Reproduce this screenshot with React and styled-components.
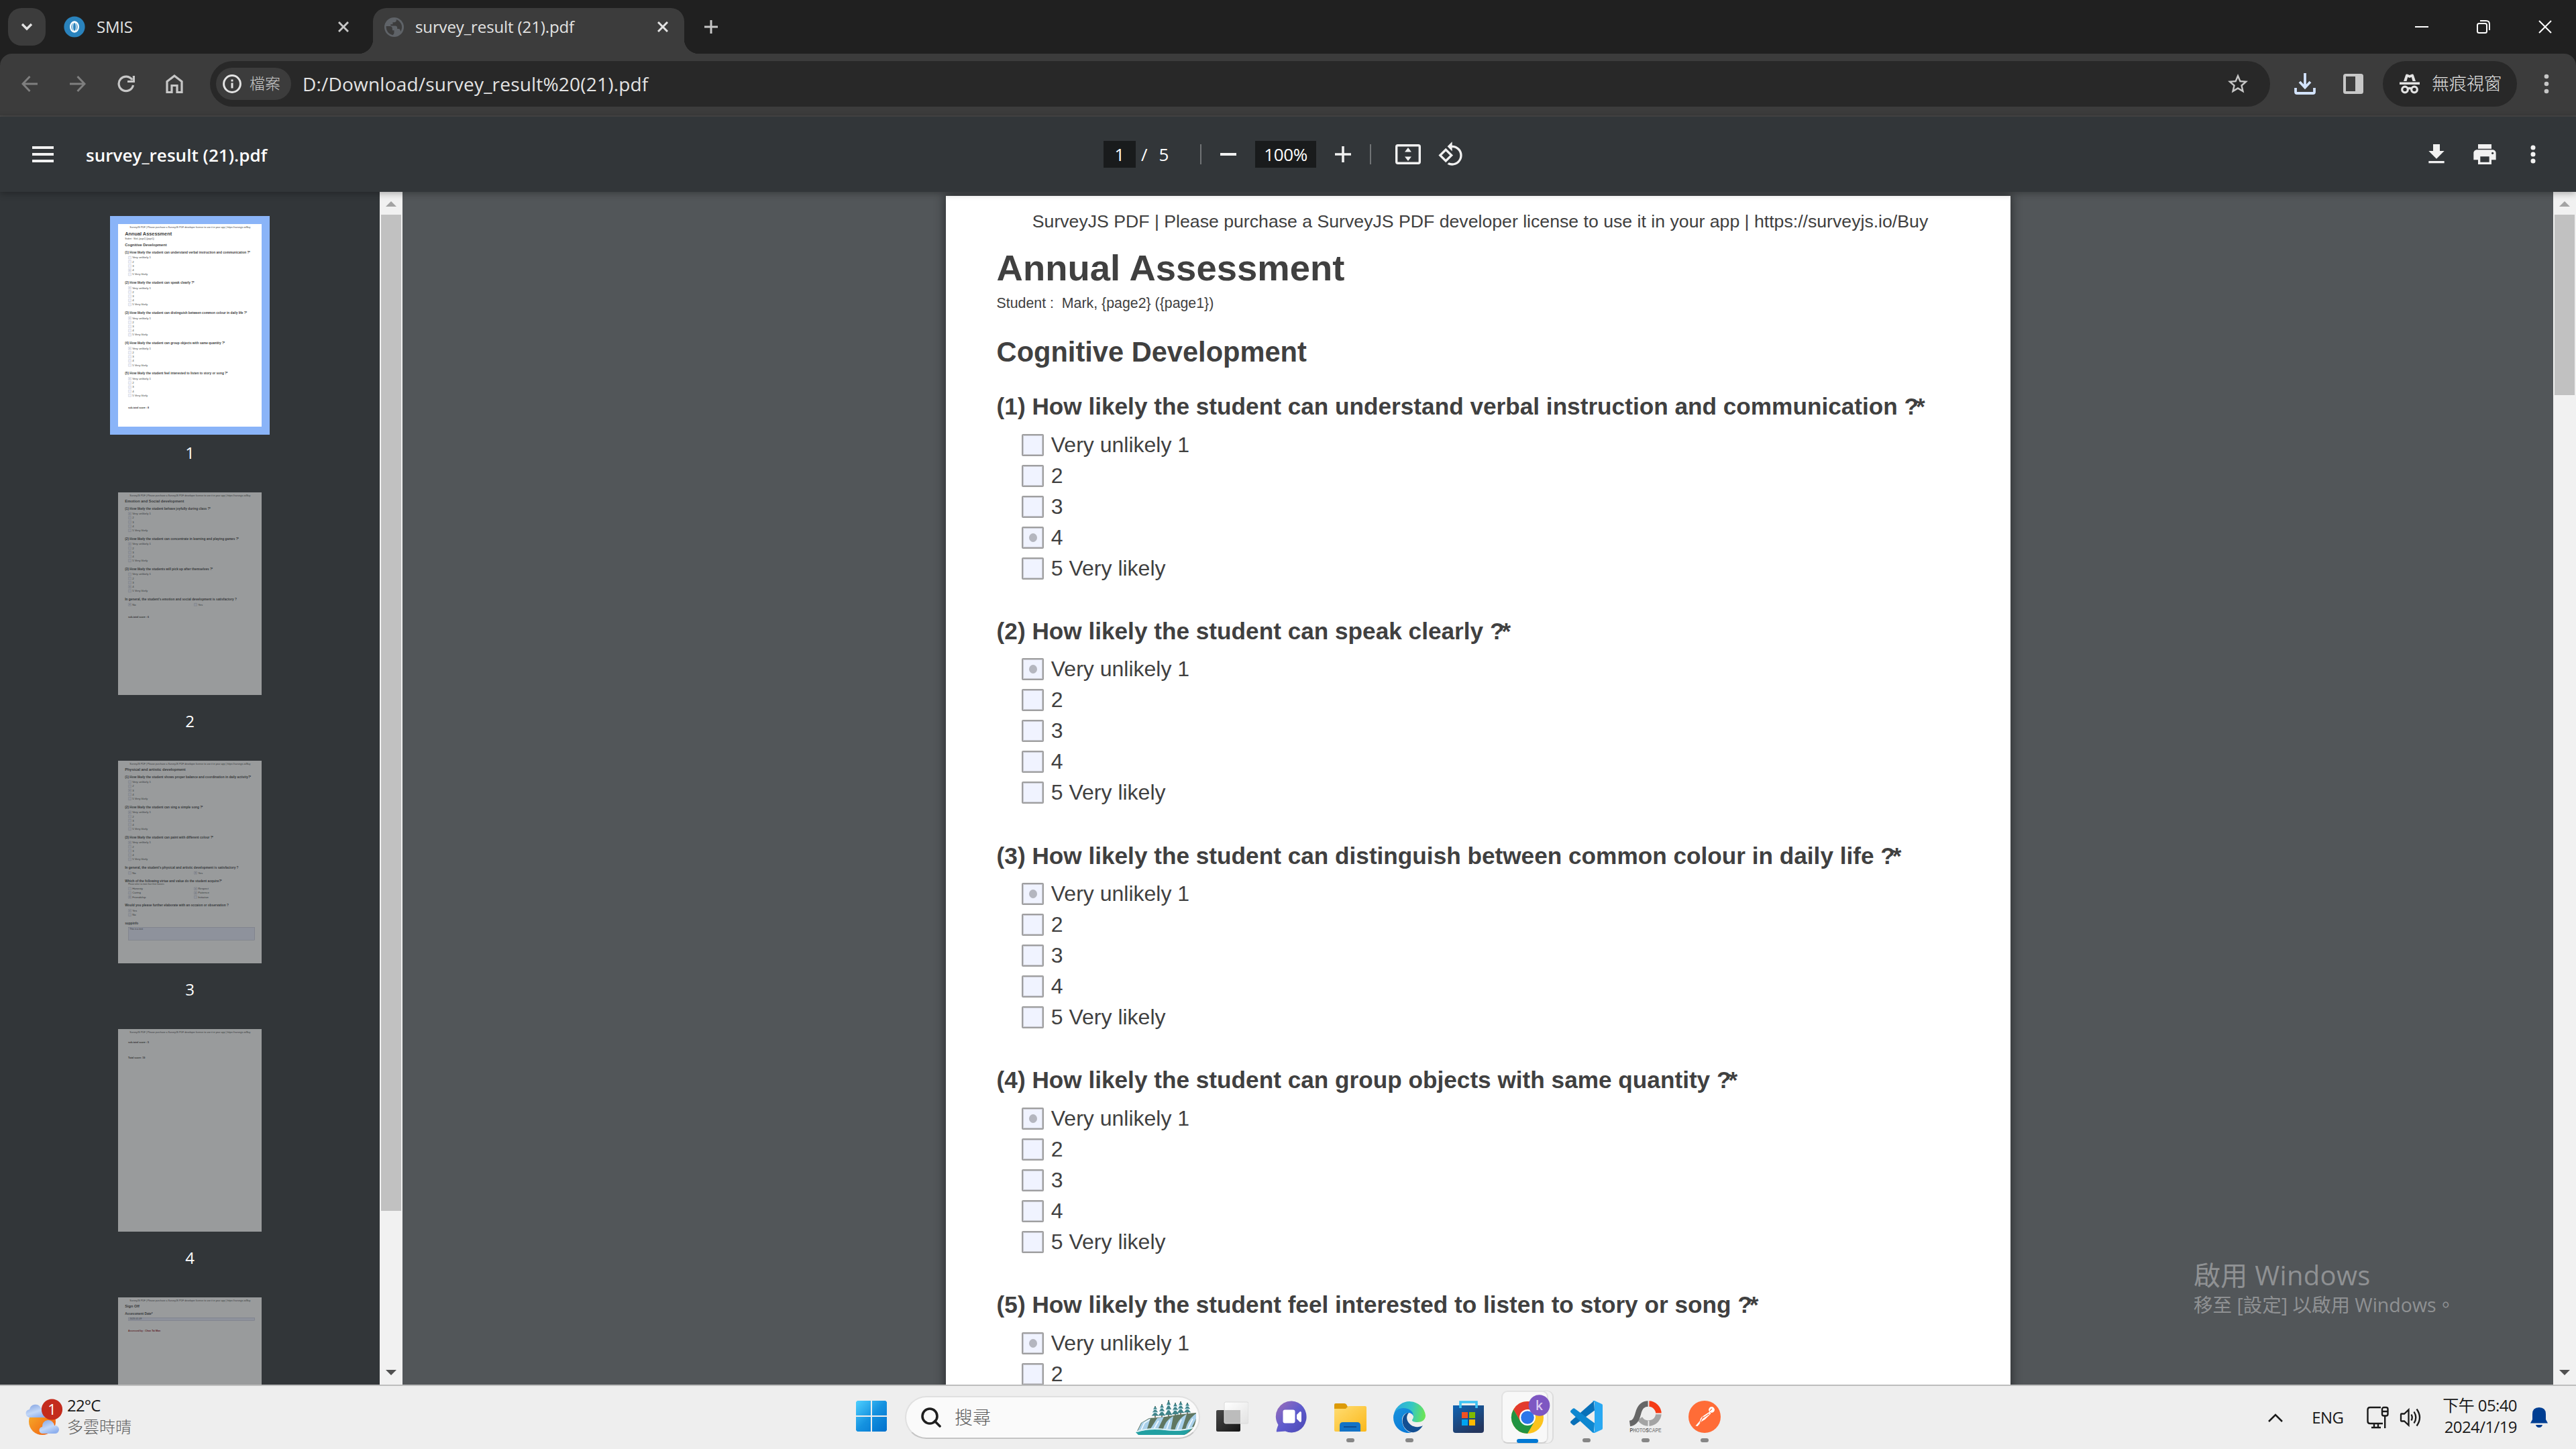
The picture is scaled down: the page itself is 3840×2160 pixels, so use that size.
import React from "react";
import styled, { createGlobalStyle, css } from "styled-components";

const UI = `"Open Sans", "Noto Sans CJK TC", sans-serif`;
const PAPER = `"Liberation Sans", Arial, sans-serif`;

const Global = createGlobalStyle`
  *, *::before, *::after { box-sizing: border-box; }
  html, body { margin: 0; background: #202020; }
  svg { display: block; flex: none; }
`;

const center = css`
  display: flex;
  align-items: center;
  justify-content: center;
`;

const Screen = styled.div`
  width: 3840px;
  height: 2160px;
  display: flex;
  flex-direction: column;
  overflow: hidden;
  position: relative;
  font-family: ${UI};
  background: #202020;
`;

const Label = styled.span`
  font-family: ${UI};
  font-size: ${(p) => p.$size || 24}px;
  font-weight: ${(p) => p.$weight || 400};
  letter-spacing: ${(p) => p.$track || 0}px;
  color: ${(p) => p.$color || "#e3e3e3"};
  line-height: 1.3;
  white-space: pre;
`;

/* ---------- browser chrome ---------- */

const TitleBar = styled.div`
  height: 80px;
  flex: none;
  display: flex;
  padding-left: 12px;
`;

const TabSearch = styled.div`
  ${center}
  width: 56px;
  height: 56px;
  margin-top: 12px;
  border-radius: 20px;
  background: #3c3c3c;
`;

const Tab = styled.div`
  position: relative;
  height: 68px;
  margin-top: 12px;
  padding-bottom: 12px;
  display: flex;
  align-items: center;
  width: ${(p) => (p.$active ? 464 : 488)}px;
  padding-left: ${(p) => (p.$active ? 17 : 27)}px;
  padding-right: ${(p) => (p.$active ? 24 : 36)}px;
  gap: 17px;
  background: ${(p) => (p.$active ? "#3c3c3c" : "transparent")};
  border-radius: 20px 20px 0 0;
  ${(p) =>
    p.$active &&
    css`
      &::before,
      &::after {
        content: "";
        position: absolute;
        bottom: 0;
        width: 22px;
        height: 22px;
      }
      &::before {
        left: -22px;
        background: radial-gradient(circle at 0 0, transparent 22px, #3c3c3c 22.5px);
      }
      &::after {
        right: -22px;
        background: radial-gradient(circle at 100% 0, transparent 22px, #3c3c3c 22.5px);
      }
    `}
`;

const TabTitle = styled(Label)`
  flex: 1;
`;

const NewTab = styled.div`
  ${center}
  width: 80px;
  height: 80px;
`;

const WindowButtons = styled.div`
  display: flex;
  margin-left: auto;
`;

const WindowButton = styled.div`
  ${center}
  width: 92px;
  height: 80px;
`;

const NavBar = styled.div`
  height: 94px;
  flex: none;
  display: flex;
  align-items: center;
  padding: 0 0 2px 8px;
  background: #3c3c3c;
  border-bottom: 2px solid #484848;
  border-radius: 18px 18px 0 0;
`;

const NavButton = styled.div`
  ${center}
  width: 72px;
  height: 68px;
  opacity: ${(p) => (p.$disabled ? 0.45 : 1)};
`;

const Omnibox = styled.div`
  display: flex;
  align-items: center;
  width: 3071px;
  height: 68px;
  margin: 0 16px 0 17px;
  padding: 0 30px 0 9px;
  border-radius: 34px;
  background: #282828;
`;

const SchemeChip = styled.div`
  display: flex;
  align-items: center;
  gap: 12px;
  width: 112px;
  height: 48px;
  padding-left: 10px;
  margin-right: 17px;
  border-radius: 24px;
  background: #3c3c3c;
`;

const Address = styled(Label)`
  flex: 1;
`;

const IncognitoPill = styled.div`
  display: flex;
  align-items: center;
  gap: 17px;
  width: 200px;
  height: 68px;
  margin-left: 8px;
  padding-left: 24px;
  border-radius: 34px;
  background: #282828;
`;

const MenuSlot = styled.div`
  ${center}
  width: 88px;
`;

/* ---------- pdf viewer ---------- */

const PdfBar = styled.div`
  position: relative;
  z-index: 2;
  height: 112px;
  flex: none;
  display: flex;
  align-items: center;
  background: #323639;
  box-shadow: 0 2px 10px rgba(0, 0, 0, 0.32);
`;

const PdfName = styled.div`
  display: flex;
  align-items: center;
  width: 1645px;
  padding-left: 48px;
  gap: 48px;
`;

const PdfTitle = styled(Label)`
  padding-top: 4px;
`;

const Burger = styled.div`
  display: flex;
  flex-direction: column;
  gap: 6px;
  width: 32px;
  i {
    height: 4px;
    background: #f1f1f1;
  }
`;

const DarkField = styled.div`
  ${center}
  width: ${(p) => p.$width}px;
  height: 40px;
  padding-top: 2px;
  background: #191b1c;
`;

const PageCount = styled.div`
  display: flex;
  align-items: center;
  gap: 17px;
  width: 96px;
  padding: 2px 0 0 8px;
`;

const Divider = styled.div`
  width: 2px;
  height: 30px;
  background: #707375;
`;

const PdfTool = styled.div`
  ${center}
  width: ${(p) => p.$width}px;
`;

const FitSlot = styled.div`
  padding-left: 36px;
  margin-right: 25px;
`;

const PdfActions = styled.div`
  display: flex;
  margin-left: auto;
  padding-right: 28px;
`;

const Body = styled.div`
  height: 1778px;
  flex: none;
  display: flex;
  overflow: hidden;
  background: #525659;
`;

const ThumbRail = styled.div`
  width: 566px;
  height: 100%;
  flex: none;
  display: flex;
  flex-direction: column;
  align-items: center;
  padding-top: 36px;
  overflow: hidden;
  background: #323639;
`;

const ThumbItem = styled.div`
  flex: none;
  display: flex;
  flex-direction: column;
  align-items: center;
  height: 400px;
`;

const ThumbFrame = styled.div`
  width: 238px;
  height: 326px;
  flex: none;
  border: 12px solid ${(p) => (p.$active ? "#8ab4f8" : "transparent")};
`;

const ThumbWindow = styled.div`
  width: 214px;
  height: 302px;
  overflow: hidden;
  background: #fff;
  opacity: ${(p) => (p.$active ? 1 : 0.5)};
`;

const ThumbScale = styled.div`
  width: 1588px;
  height: 2245px;
  transform: scale(0.1348);
  transform-origin: 0 0;
`;

const ThumbNumber = styled(Label)`
  margin-top: 11px;
`;

const ScrollTrack = styled.div`
  width: 34px;
  height: 100%;
  flex: none;
  display: flex;
  flex-direction: column;
  align-items: center;
  padding: 14px 0;
  background: #f1f1f1;
`;

const ScrollArrow = styled.div`
  width: 0;
  height: 0;
  flex: none;
  border: 8px solid transparent;
  ${(p) =>
    p.$down
      ? css`
          border-top-color: #505050;
          border-bottom: 0;
          margin-top: auto;
        `
      : css`
          border-bottom-color: #a3a3a3;
          border-top: 0;
        `}
`;

const ScrollThumb = styled.div`
  width: 30px;
  height: ${(p) => p.$height}px;
  flex: none;
  margin-top: 12px;
  background: #c1c1c1;
`;

const Canvas = styled.div`
  flex: 1;
  display: flex;
  justify-content: center;
  align-items: flex-start;
  padding: 6px 0 0 1px;
  overflow: hidden;
`;

const Sheet = styled.div`
  width: 1587px;
  height: 2245px;
  flex: none;
  display: flex;
  flex-direction: column;
  padding: 22px 75.6px 0;
  background: #fff;
  font-family: ${PAPER};
  color: #404040;
  box-shadow: ${(p) => (p.$flat ? "none" : "0 0 14px 2px rgba(0, 0, 0, 0.45)")};
  white-space: pre;
`;

const License = styled.div`
  font-size: 26.67px;
  line-height: 32px;
  height: 32px;
  text-align: center;
  margin: 0 -8px 0 -2px;
`;

const DocTitle = styled.div`
  font-size: 54.4px;
  line-height: 62px;
  font-weight: 700;
  letter-spacing: 0.06px;
  margin-top: 22.5px;
`;

const DocNote = styled.div`
  font-size: 21.33px;
  line-height: 24px;
  margin-top: 9.5px;
`;

const Section = styled.div`
  font-size: 41.6px;
  line-height: 48px;
  height: 48px;
  font-weight: 700;
  margin: ${(p) => (p.$first ? 36.5 : 19)}px 0 37.6px;
`;

const QuestionBlock = styled.div`
  height: ${(p) => p.$height || 334.8}px;
  flex: none;
  display: flex;
  flex-direction: column;
`;

const QuestionTitle = styled.div`
  font-size: 35.2px;
  line-height: 40px;
  height: 40px;
  font-weight: 700;
  span {
    margin-left: -4px;
  }
`;

const QuestionNote = styled.div`
  font-size: 21.33px;
  line-height: 24px;
  padding: 3px 0 0 37.4px;
  margin-bottom: -2px;
`;

const Options = styled.div`
  display: grid;
  grid-template-columns: ${(p) => (p.$cols === 2 ? "727px 600px" : "auto")};
  grid-auto-rows: 33px;
  row-gap: 13px;
  padding-left: 37.6px;
  margin-top: 20.6px;
`;

const Option = styled.div`
  display: flex;
  align-items: center;
  gap: 10.6px;
  font-size: 32px;
  line-height: 33px;
`;

const Box = styled.div`
  ${center}
  width: 33px;
  height: 33px;
  border: 2.7px solid #9f9fa0;
  border-radius: 2px;
  background: #f0f3ff;
  box-shadow: inset 0 0 0 1px #c9cad2;
  &::after {
    content: "";
    width: 12px;
    height: 13px;
    border-radius: 50%;
    background: ${(p) => (p.$on ? "#b4b6bf" : "transparent")};
  }
`;

const Score = styled.div`
  font-size: 26.67px;
  line-height: 32px;
  font-weight: 700;
  padding-left: 36px;
  margin-top: ${(p) => p.$top}px;
  color: ${(p) => p.$color || "#303030"};
`;

const InputBox = styled.div`
  width: 1399px;
  height: ${(p) => p.$height}px;
  margin: ${(p) => p.$top}px 0 0 37.4px;
  padding-left: 12px;
  border: 3px solid #a8abc0;
  background: #e9edff;
  font-size: ${(p) => p.$size}px;
  line-height: 26px;
`;

const ActivateNotice = styled.div`
  position: absolute;
  left: 3270px;
  top: 1875px;
  z-index: 3;
  display: flex;
  flex-direction: column;
`;

/* ---------- taskbar ---------- */

const Taskbar = styled.div`
  height: 96px;
  flex: none;
  display: flex;
  align-items: center;
  border-top: 2px solid #bdbdbd;
  background: #eeeeee;
`;

const Weather = styled.div`
  width: 1255px;
  display: flex;
  align-items: center;
  padding-left: 36px;
  gap: 4px;
`;

const Stack = styled.div`
  display: flex;
  flex-direction: column;
  align-items: ${(p) => p.$align || "flex-start"};
  margin-bottom: 4px;
`;

const Line = styled(Label)`
  line-height: 32px;
  height: 32px;
`;

const AppSlot = styled.div`
  width: 88px;
  height: 94px;
  flex: none;
  display: flex;
  flex-direction: column;
  align-items: center;
  padding-top: 22px;
  gap: 8px;
`;

const ActiveSlot = styled(AppSlot)`
  height: 79px;
  width: 70px;
  margin: 0 13px 2px 5px;
  padding: 14px 0 0 8px;
  border: 2px solid #e2e2e2;
  border-bottom-color: #d0d0d0;
  border-radius: 9px;
  background: #f8f8f8;
  box-shadow: 7px 0 0 -1px #f2f2f2, 8px 0 0 0 #dcdcdc;
`;

const Running = styled.div`
  width: ${(p) => (p.$active ? 32 : 12)}px;
  height: 6px;
  flex: none;
  border-radius: 3px;
  background: ${(p) => (p.$active ? "#0078d4" : "#868686")};
`;

const SearchPill = styled.div`
  display: flex;
  align-items: center;
  width: 440px;
  height: 64px;
  margin: 0 4px 0 6px;
  padding: 0 4px 0 22px;
  border: 2px solid #e0e0e0;
  border-bottom-color: #c4c4c4;
  border-radius: 32px;
  background: #fafafa;
`;

const SearchText = styled(Label)`
  flex: 1;
  margin-left: 20px;
`;

const Tray = styled.div`
  display: flex;
  align-items: center;
  margin-left: auto;
  padding-right: 42px;
  height: 94px;
`;

const TrayLabel = styled(Label)`
  width: 82px;
  margin-left: 43px;
`;

const TrayIcon = styled.div`
  margin-right: ${(p) => p.$right}px;
`;

const BellSlot = styled.div`
  padding-left: 20px;
`;

/* ---------- icons ---------- */

const Stroke = ({ w, h = w, vb, color = "#e3e3e3", sw = 2, children, cap = "butt" }) => (
  <svg width={w} height={h} viewBox={vb || `0 0 ${w} ${h}`} fill="none" stroke={color} strokeWidth={sw} strokeLinecap={cap}>
    {children}
  </svg>
);

const Fill = ({ s, color = "#f1f1f1", d, vb = "0 0 24 24" }) => (
  <svg width={s} height={s} viewBox={vb} fill={color}>
    <path d={d} />
  </svg>
);

const Cross = ({ s = 16, sw = 3, color }) => (
  <Stroke w={s} sw={sw} color={color}>
    <path d={`M1 1 L${s - 1} ${s - 1} M${s - 1} 1 L1 ${s - 1}`} />
  </Stroke>
);

const Dots = ({ color, gap, r = 3.3 }) => (
  <svg width="10" height="32" viewBox="0 0 10 32" fill={color}>
    <circle cx="5" cy={16 - gap} r={r} />
    <circle cx="5" cy="16" r={r} />
    <circle cx="5" cy={16 + gap} r={r} />
  </svg>
);

const SmisIcon = () => (
  <svg width="32" height="32" viewBox="0 0 32 32">
    <circle cx="16" cy="16" r="15.6" fill="#2a83bd" />
    <ellipse cx="16" cy="16" rx="5.8" ry="7.6" fill="none" stroke="#fff" strokeWidth="2.4" />
    <ellipse cx="16" cy="16" rx="2.6" ry="6.4" fill="none" stroke="#fff" strokeWidth="1.2" />
  </svg>
);

const GlobeIcon = () => (
  <svg width="29" height="29" viewBox="0 0 28 28">
    <circle cx="14" cy="14" r="14" fill="#5f6368" />
    <path
      d="M2.600 12.600H7.500Q11.500 12.600 11.500 16.500V18.500H14V22.500Q14 24 12 25.300A11.500 11.500 0 0 1 2.600 12.600zM17 3Q18 6.500 14.500 7H12V10H9V12H15.500Q18.500 12 18.500 15V16.500H20.500Q23 16.500 23.200 20.500A11.500 11.500 0 0 0 17 3z"
      fill="#3c3c3c"
    />
  </svg>
);

const WeatherIcon = () => (
  <svg width="60" height="60" viewBox="36 2074 60 60">
    <defs>
      <linearGradient id="sun" x1="0" y1="0" x2="1" y2="1">
        <stop offset="0" stopColor="#f7b52c" />
        <stop offset="1" stopColor="#f0580f" />
      </linearGradient>
      <linearGradient id="cloud" x1="0" y1="0" x2="0.6" y2="1">
        <stop offset="0" stopColor="#7f9fe0" />
        <stop offset="0.6" stopColor="#c3d8f8" />
        <stop offset="1" stopColor="#8fb0ee" />
      </linearGradient>
    </defs>
    <circle cx="63" cy="2110" r="20" fill="url(#sun)" />
    <path d="M45 2104a6 6 0 0 1-1-12 9 9 0 0 1 17-2 8 8 0 0 1 8 14z" fill="url(#cloud)" />
    <path d="M64 2128a5 5 0 0 1-1-10 9 9 0 0 1 18-2 6 6 0 0 1 2 12z" fill="url(#cloud)" />
    <circle cx="77.5" cy="2092" r="15.6" fill="#c42b1c" />
    <text x="77.5" y="2100" fontSize="22" fill="#fff" textAnchor="middle" fontFamily="Open Sans">1</text>
  </svg>
);

const WindowsIcon = () => (
  <svg width="46" height="46" viewBox="0 0 46 46">
    <defs>
      <linearGradient id="win" x1="0" y1="0" x2="1" y2="1">
        <stop offset="0" stopColor="#4fd0ff" />
        <stop offset="0.5" stopColor="#1592e0" />
        <stop offset="1" stopColor="#0070cc" />
      </linearGradient>
    </defs>
    <path d="M2 0H22V22H0V2zM24 0H44L46 2V22H24zM0 24H22V46H2L0 44zM24 24H46V44L44 46H24z" fill="url(#win)" />
  </svg>
);

const Tree = ({ x, y, h }) => (
  <g>
    <path d={`M${x} ${y}v${h}`} stroke="#5a4a3a" strokeWidth="1.4" />
    <path
      d={`M${x} ${y}l3 ${h * 0.28}h-6zM${x} ${y + h * 0.24}l4.2 ${h * 0.3}h-8.4zM${x} ${y + h * 0.5}l5.4 ${h * 0.36}h-10.8z`}
      fill="#3f8389"
    />
    <path d={`M${x - 3} ${y + h * 0.3}h5M${x - 4} ${y + h * 0.56}h6`} stroke="#b9dce6" strokeWidth="1.4" />
  </g>
);

const SearchScene = () => (
  <svg width="90" height="52" viewBox="0 0 90 52">
    <defs>
      <clipPath id="pill">
        <path d="M0 0H90V28Q88 46 72 52H0z" />
      </clipPath>
    </defs>
    <g clipPath="url(#pill)">
      <Tree x={29} y={9} h={17} />
      <Tree x={39} y={6} h={20} />
      <Tree x={49} y={0} h={26} />
      <Tree x={59} y={4} h={20} />
      <Tree x={67} y={2} h={20} />
      <Tree x={77} y={4} h={17} />
      <path d="M2 46L8 34L20 27L44 25L62 22L90 19V52H4z" fill="#5f7660" />
      <path d="M3 46L9 34L22 27L16 46zM20 46L32 27L42 25L32 46zM40 46Q44 30 56 24L52 46zM58 46Q62 28 76 21L68 46zM74 44Q78 28 90 20V28L82 44z" fill="#a9d0ea" />
      <path d="M8 45l5-11 8-5M26 45l8-14M46 44l5-14M62 44l6-15M78 42l7-14" stroke="#eef8ff" strokeWidth="1.8" fill="none" />
      <path d="M0 48Q20 42 44 45T84 42L74 52H4z" fill="#22a0a2" />
      <path d="M2 47Q20 41 44 44T86 41" stroke="#d9f1f6" strokeWidth="2" fill="none" />
    </g>
  </svg>
);

const TaskViewIcon = () => (
  <svg width="48" height="48" viewBox="0 0 48 48">
    <defs>
      <linearGradient id="tv" x1="0" y1="0" x2="1" y2="1">
        <stop offset="0" stopColor="#484848" />
        <stop offset="1" stopColor="#161616" />
      </linearGradient>
      <linearGradient id="tvFront" x1="0" y1="0" x2="1" y2="1">
        <stop offset="0" stopColor="#ffffff" />
        <stop offset="1" stopColor="#e2e2e2" />
      </linearGradient>
    </defs>
    <rect x="0" y="14" width="36" height="32" rx="2" fill="url(#tv)" />
    <rect x="12" y="2" width="36" height="32" rx="2" fill="url(#tvFront)" stroke="#dadada" strokeWidth="1" />
    <path d="M12.500 14h23.500v19.500H12.500z" fill="#bcbcbc" />
  </svg>
);

const ChatIcon = () => (
  <svg width="48" height="48" viewBox="0 0 48 48">
    <defs>
      <linearGradient id="chat" x1="0" y1="0" x2="1" y2="1">
        <stop offset="0" stopColor="#a070b8" />
        <stop offset="0.5" stopColor="#5f5ccd" />
        <stop offset="1" stopColor="#4b48b4" />
      </linearGradient>
    </defs>
    <path d="M24.500 0.500A22.500 23.500 0 1 1 15 45.500L2 46.500Q1 45 4.500 36A23 23 0 0 1 24.500 0.500z" fill="url(#chat)" />
    <rect x="11.500" y="13.500" width="18" height="20" rx="3" fill="#fff" />
    <path d="M32 21l5-5q2 0 2 2v12q0 2-2 2l-5-5z" fill="#fff" />
  </svg>
);

const FolderIcon = () => (
  <svg width="48" height="48" viewBox="0 0 48 48">
    <defs>
      <linearGradient id="fold" x1="0" y1="0" x2="1" y2="1">
        <stop offset="0" stopColor="#ffdd73" />
        <stop offset="1" stopColor="#fbb81a" />
      </linearGradient>
    </defs>
    <path d="M0 6q0-2 2-2h13q2 0 3 1.500L20 9h26v10H0z" fill="#dc9a08" />
    <path d="M0 12h17l4-4h25q2 0 2 2v34q0 2-2 2H2q-2 0-2-2z" fill="url(#fold)" />
    <path d="M8 46V37q0-5 5-5h21q5 0 5 5v9z" fill="#1373c6" />
    <path d="M14 39h19" stroke="#0c4c94" strokeWidth="2" />
  </svg>
);

const EdgeIcon = () => (
  <svg width="48" height="48" viewBox="0 0 48 48">
    <defs>
      <linearGradient id="e1" x1="0" y1="0.300" x2="1" y2="0.400">
        <stop offset="0" stopColor="#2ba7e2" />
        <stop offset="0.550" stopColor="#34c7c4" />
        <stop offset="1" stopColor="#6be554" />
      </linearGradient>
      <linearGradient id="e2" x1="0" y1="0" x2="0.500" y2="1">
        <stop offset="0" stopColor="#1a92dc" />
        <stop offset="1" stopColor="#0a7bd8" />
      </linearGradient>
    </defs>
    <path d="M1 19A24 24 0 0 1 48 22c0 7-6 10-12 10-5 0-8-1-8-3 0-1 2-2 2-6 0-5-5-10-13-10C8 13 3 17 1 19z" fill="url(#e1)" />
    <path d="M0 25C0 16 7 11 15 11c9 0 15 5 15 12-2-4-5-5-8-5-5 0-9 5-9 11 0 9 6 17 14 19C13 50 0 40 0 25z" fill="url(#e2)" />
    <path d="M19 19c-6 4-7 13-3 20 4 6 10 9 15 8 6-1 10-5 13-10-5 3-13 3-18-1-6-5-8-12-3-18-2 0-3 0-4 1z" fill="#124f93" />
  </svg>
);

const StoreIcon = () => (
  <svg width="48" height="48" viewBox="0 0 48 48">
    <defs>
      <linearGradient id="st" x1="0" y1="0" x2="0.600" y2="1">
        <stop offset="0" stopColor="#0f64b4" />
        <stop offset="1" stopColor="#24365e" />
      </linearGradient>
    </defs>
    <path d="M1 7h46v37q0 4-4 4H5q-4 0-4-4z" fill="url(#st)" />
    <path d="M12 11V2h24v9" fill="none" stroke="#3cc2f4" strokeWidth="3.600" />
    <path d="M14 17h9v9h-9z" fill="#f25022" />
    <path d="M25 17h9v9h-9z" fill="#7fba00" />
    <path d="M14 28h9v9h-9z" fill="#00a4ef" />
    <path d="M25 28h9v9h-9z" fill="#ffb900" />
  </svg>
);

const ChromeIcon = () => (
  <svg width="48" height="48" viewBox="0 0 48 48" overflow="visible">
    <circle cx="24" cy="24" r="24" fill="#fcc31e" />
    <path d="M3.200 12L13.600 30L24 24V12H44.800A24 24 0 0 0 3.200 12z" fill="#e33b2e" />
    <path d="M3.200 12L13.600 30L24 36L34.400 30L24 48A24 24 0 0 1 3.200 12z" fill="#229342" />
    <circle cx="24" cy="24" r="12" fill="#fff" />
    <circle cx="24" cy="24" r="9.800" fill="#2b76ea" />
    <circle cx="41.500" cy="6" r="15.800" fill="#7e57c2" />
    <text x="41.500" y="12.500" fontSize="19" fontWeight="600" fill="#dccbf2" textAnchor="middle" fontFamily="Open Sans">k</text>
  </svg>
);

const CodeIcon = () => (
  <svg width="48" height="48" viewBox="0 0 48 48">
    <path d="M35 0.300L36 14.500L6 36.500Q4.500 37 3.400 36L0.600 33.400Q-0.500 32 0.600 30.600z" fill="#0870b8" />
    <path d="M35 47.700L36 33.500L6 11.500Q4.500 11 3.400 12L0.600 14.600Q-0.500 16 0.600 17.400L32 46.500Q33.500 48 35 47.700z" fill="#0e87d0" />
    <path d="M36 0L47 5Q48 5.600 48 7V41Q48 42.400 47 43L36 48Q34 48.300 33 47.300Q36 47 36 44V4Q36 1 33 0.700Q34 -0.300 36 0z" fill="#29a8f2" />
  </svg>
);

const PhotoIcon = () => (
  <svg width="48" height="48" viewBox="0 0 48 48">
    <path d="M43.500 19.500A15.200 15.200 0 0 1 15.500 26.500" fill="none" stroke="#a4a4a4" strokeWidth="8.500" />
    <path d="M0.500 34C8 33 10.500 28 13 19C15.500 9 20 4.500 28.500 4.500" fill="none" stroke="#666666" strokeWidth="8.500" />
    <path d="M28.500 4.500A15 15 0 0 1 43.500 19.500" fill="none" stroke="#f53c16" strokeWidth="8.500" />
    <path d="M28.500 0V9.500M28.500 30V39M38.500 19.300H48" stroke="#eeeeee" strokeWidth="1.800" />
    <text x="0.500" y="47.300" fontSize="9.500" fontWeight="700" fill="#8a8a8a" textLength="47" lengthAdjust="spacingAndGlyphs" fontFamily="Liberation Sans">
      <tspan fill="#555">P</tspan>HOTO<tspan fill="#555">S</tspan>CAPE
    </text>
  </svg>
);

const PostmanIcon = () => (
  <svg width="48" height="48" viewBox="0 0 48 48">
    <circle cx="24" cy="24" r="24" fill="#ff6c37" />
    <circle cx="34.500" cy="13.500" r="4.400" fill="#fff" />
    <path d="M31.500 16.500L20 24q-3 3-3 6l-6.500 7.500 3 0.500 6-7 5-3 9-9z" fill="#fff" />
    <path d="M35 12l-3 3M20 27l11-7.500M22 23.500l-5 10" stroke="#ff6c37" strokeWidth="1.100" />
  </svg>
);

/* ---------- document content ---------- */

const SCALE = ["Very unlikely 1", "2", "3", "4", "5 Very likely"];

const Choices = ({ items, on = [], cols }) => (
  <Options $cols={cols}>
    {items.map((t, i) => (
      <Option key={t}>
        <Box $on={on.includes(i)} />
        {t}
      </Option>
    ))}
  </Options>
);

const Question = ({ title, required = true, items = SCALE, on, cols, height, note }) => (
  <QuestionBlock $height={height}>
    <QuestionTitle>
      {title}
      {required && <span>*</span>}
    </QuestionTitle>
    {note && <QuestionNote>{note}</QuestionNote>}
    <Choices items={items} on={on} cols={cols} />
  </QuestionBlock>
);

const Page = ({ flat, children }) => (
  <Sheet $flat={flat}>
    <License>SurveyJS PDF | Please purchase a SurveyJS PDF developer license to use it in your app | https://surveyjs.io/Buy</License>
    {children}
  </Sheet>
);

const PageOne = ({ flat }) => (
  <Page flat={flat}>
    <DocTitle>Annual Assessment</DocTitle>
    <DocNote>{"Student :  Mark, {page2} ({page1})"}</DocNote>
    <Section $first>Cognitive Development</Section>
    <Question title="(1) How likely the student can understand verbal instruction and communication ?" on={[3]} />
    <Question title="(2) How likely the student can speak clearly ?" on={[0]} />
    <Question title="(3) How likely the student can distinguish between common colour in daily life ?" on={[0]} />
    <Question title="(4) How likely the student can group objects with same quantity ?" on={[0]} />
    <Question title="(5) How likely the student feel interested to listen to story or song ?" on={[0]} />
    <Score $top={46}>sub-total score : 8</Score>
  </Page>
);

const PageTwo = () => (
  <Page flat>
    <Section>Emotion and Social development</Section>
    <Question title="(1) How likely the student behave joyfully during class ?" on={[0]} />
    <Question title="(2) How likely the student can concentrate in learning and playing games ?" on={[0]} />
    <Question title="(3) How likely the students will pick up after themselves ?" on={[3]} />
    <Question title="In general, the student's emotion and social development is satisfactory ?" required={false} items={["No", "Yes"]} on={[0]} cols={2} height={150} />
    <Score $top={52}>sub-total score : 6</Score>
  </Page>
);

const PageThree = () => (
  <Page flat>
    <Section>Physical and artistic development</Section>
    <Question title="(1) How likely the student shows proper balance and coordination in daily activity?" on={[2]} />
    <Question title="(2) How likely the student can sing a simple song ?" on={[0]} />
    <Question title="(3) How likely the student can paint with different colour ?" on={[0]} />
    <Question title="In general, the student's physical and artistic development is satisfactory ?" required={false} items={["No", "Yes"]} on={[1]} cols={2} height={150} />
    <Question
      title="Which of the following virtue and value do the student acquire?"
      note="Please select no more than three features"
      items={["Honesty", "Respect", "Caring", "Patience", "Friendship", "Initiative"]}
      on={[1, 3, 4]}
      cols={2}
      height={268}
    />
    <Question title="Would you please further elaborate with an occaion or observation ?" required={false} items={["Yes", "No"]} on={[0]} height={200} />
    <QuestionTitle>suppinfo</QuestionTitle>
    <InputBox $top={20} $height={143} $size={26}>This is a test</InputBox>
  </Page>
);

const PageFour = () => (
  <Page flat>
    <Score $top={74}>sub-total score : 5</Score>
    <Score $top={143}>Total score: 19</Score>
  </Page>
);

const PageFive = () => (
  <Page flat>
    <Section>Sign Off</Section>
    <QuestionTitle>Assessment Date*</QuestionTitle>
    <InputBox $top={24} $height={34} $size={26}>2023-01-09</InputBox>
    <Score $top={98} $color="#8a1010">Assessed by : Chan Tai Man</Score>
  </Page>
);

const PAGES = [() => <PageOne flat />, PageTwo, PageThree, PageFour, PageFive];

const DOWNLOAD = "M19 9h-4V3H9v6H5l7 7 7-7zM5 18v2h14v-2H5z";
const PRINT = "M19 8H5c-1.66 0-3 1.34-3 3v6h4v4h12v-4h4v-6c0-1.66-1.34-3-3-3zm-3 11H8v-5h8v5zm3-7c-.55 0-1-.45-1-1s.45-1 1-1 1 .45 1 1-.45 1-1 1zm-1-9H6v4h12V3z";
const ROTATE =
  "M7.34 6.41L.86 12.9l6.49 6.48 6.49-6.48-6.5-6.49zM3.69 12.9l3.66-3.66L11 12.9l-3.66 3.66-3.65-3.66zm15.67-6.26C17.61 4.88 15.3 4 13 4V.76L8.76 5 13 9.24V6c1.79 0 3.58.68 4.95 2.05 2.73 2.73 2.73 7.17 0 9.9C16.58 19.32 14.79 20 13 20c-.97 0-1.94-.21-2.84-.61l-1.49 1.49C10.02 21.62 11.51 22 13 22c2.3 0 4.61-.88 6.36-2.64 3.52-3.51 3.52-9.21 0-12.72z";
const STAR =
  "M22 9.24l-7.19-.62L12 2 9.19 8.63 2 9.24l5.46 4.73L5.82 21 12 17.27 18.18 21l-1.63-7.03L22 9.24zM12 15.4l-3.76 2.27 1-4.28-3.32-2.88 4.38-.38L12 6.1l1.71 4.04 4.38.38-3.32 2.88 1 4.28L12 15.4z";

export default function App() {
  return (
    <Screen>
      <Global />
      <TitleBar>
        <TabSearch>
          <Stroke w={18} h={12} sw={3.4}>
            <path d="M2 2L9 9L16 2" />
          </Stroke>
        </TabSearch>
        <Tab>
          <SmisIcon />
          <TabTitle $track={-0.2}>SMIS</TabTitle>
          <Cross color="#c7c7c7" />
        </Tab>
        <Tab $active>
          <GlobeIcon />
          <TabTitle $track={-0.12}>survey_result (21).pdf</TabTitle>
          <Cross />
        </Tab>
        <NewTab>
          <Stroke w={20} sw={3} color="#c7c7c7">
            <path d="M10 0V20M0 10H20" />
          </Stroke>
        </NewTab>
        <WindowButtons>
          <WindowButton>
            <Stroke w={20} color="#fff">
              <path d="M0 10H20" />
            </Stroke>
          </WindowButton>
          <WindowButton>
            <Stroke w={20} color="#fff">
              <rect x="1" y="5" width="14" height="14" rx="2.500" />
              <path d="M5 1H14Q19 1 19 6V15" />
            </Stroke>
          </WindowButton>
          <WindowButton>
            <Cross s={20} sw={2} color="#fff" />
          </WindowButton>
        </WindowButtons>
      </TitleBar>

      <NavBar>
        <NavButton $disabled>
          <Stroke w={24} sw={3} color="#d0d0d0">
            <path d="M24 12H2M12.500 1L2 12L12.500 23" />
          </Stroke>
        </NavButton>
        <NavButton $disabled>
          <Stroke w={24} sw={3} color="#d0d0d0">
            <path d="M0 12H22M11.500 1L22 12L11.500 23" />
          </Stroke>
        </NavButton>
        <NavButton>
          <Stroke w={26} sw={3.200} color="#c7c7c7">
            <path d="M22 7A10.800 10.800 0 1 0 23.500 15M24.400 1V9.500H15" />
          </Stroke>
        </NavButton>
        <NavButton>
          <Stroke w={26} h={30} sw={3.200} color="#c7c7c7">
            <path d="M2 11.500L13 3L24 11.500V27.500H17V17.500H9V27.500H2z" />
          </Stroke>
        </NavButton>
        <Omnibox>
          <SchemeChip>
            <svg width="28" height="28" viewBox="0 0 28 28" fill="#e3e3e3">
              <circle cx="14" cy="14" r="12.400" fill="none" stroke="#e3e3e3" strokeWidth="3" />
              <path d="M12.500 12.500h3v8h-3zM12.500 7.500h3v3h-3z" />
            </svg>
            <Label $size={23} $weight={300} $color="#c7c7c7">檔案</Label>
          </SchemeChip>
          <Address $size={28} $track={0.2}>D:/Download/survey_result%20(21).pdf</Address>
          <Fill s={36} color="#c7c7c7" d={STAR} />
        </Omnibox>
        <NavButton>
          <Stroke w={32} h={34} sw={3.800} color="#d3e3fd">
            <path d="M16 1V22M8 14L16 22.500L24 14M2 23V29Q2 31 4 31H28Q30 31 30 29V23" />
          </Stroke>
        </NavButton>
        <NavButton>
          <svg width="30" height="30" viewBox="0 0 30 30">
            <rect width="30" height="30" rx="3.500" fill="#c7c7c7" />
            <rect x="4" y="4" width="14" height="22" fill="#3c3c3c" />
          </svg>
        </NavButton>
        <IncognitoPill>
          <svg width="32" height="32" viewBox="0 0 32 32" fill="#e3e3e3">
            <path d="M1 13.500h30v3.500H1z" />
            <path d="M7 12L10 3q.8-2 3-1.200L16 3l3-1.200q2.200-.8 3 1.200L25 12zM11.500 12H20.500L18.800 6L16 7L13.200 6z" fillRule="evenodd" />
            <g fill="none" stroke="#e3e3e3" strokeWidth="3.200">
              <circle cx="9" cy="24.500" r="4.300" />
              <circle cx="23" cy="24.500" r="4.300" />
              <path d="M13 23.500Q16 21.500 19 23.500" />
            </g>
          </svg>
          <Label $size={26} $weight={300}>無痕視窗</Label>
        </IncognitoPill>
        <MenuSlot>
          <Dots color="#c7c7c7" gap={11} />
        </MenuSlot>
      </NavBar>

      <PdfBar>
        <PdfName>
          <Burger>
            <i />
            <i />
            <i />
          </Burger>
          <PdfTitle $size={26} $weight={600} $color="#fff" $track={0.05}>survey_result (21).pdf</PdfTitle>
        </PdfName>
        <DarkField $width={48}>
          <Label $size={26} $color="#fff">1</Label>
        </DarkField>
        <PageCount>
          <Label $size={26} $color="#fff">/</Label>
          <Label $size={26} $color="#fff">5</Label>
        </PageCount>
        <Divider />
        <PdfTool $width={80}>
          <Stroke w={24} sw={4} color="#f1f1f1">
            <path d="M0 12H24" />
          </Stroke>
        </PdfTool>
        <DarkField $width={91}>
          <Label $size={26} $color="#fff" $track={-0.4}>100%</Label>
        </DarkField>
        <PdfTool $width={80}>
          <Stroke w={24} sw={3.600} color="#f1f1f1">
            <path d="M0 12H24M12 0V24" />
          </Stroke>
        </PdfTool>
        <Divider />
        <FitSlot>
          <svg width="38" height="30" viewBox="0 0 38 30" fill="#f1f1f1">
            <rect x="1.700" y="1.700" width="34.600" height="26.600" rx="2" fill="none" stroke="#f1f1f1" strokeWidth="3.400" />
            <path d="M19 5l5 6.500H14zM19 25l5-6.500H14z" />
          </svg>
        </FitSlot>
        <Fill s={40} d={ROTATE} />
        <PdfActions>
          <PdfTool $width={72}>
            <Fill s={40} d={DOWNLOAD} />
          </PdfTool>
          <PdfTool $width={72}>
            <Fill s={40} d={PRINT} />
          </PdfTool>
          <PdfTool $width={72}>
            <Dots color="#f1f1f1" gap={10} r={3.500} />
          </PdfTool>
        </PdfActions>
      </PdfBar>

      <Body>
        <ThumbRail>
          {PAGES.map((P, i) => (
            <ThumbItem key={i}>
              <ThumbFrame $active={i === 0}>
                <ThumbWindow $active={i === 0}>
                  <ThumbScale>
                    <P />
                  </ThumbScale>
                </ThumbWindow>
              </ThumbFrame>
              {i < 4 && <ThumbNumber $color="#fff">{i + 1}</ThumbNumber>}
            </ThumbItem>
          ))}
        </ThumbRail>
        <ScrollTrack>
          <ScrollArrow />
          <ScrollThumb $height={1485} />
          <ScrollArrow $down />
        </ScrollTrack>
        <Canvas>
          <PageOne />
        </Canvas>
        <ScrollTrack>
          <ScrollArrow />
          <ScrollThumb $height={269} />
          <ScrollArrow $down />
        </ScrollTrack>
      </Body>

      <Taskbar>
        <Weather>
          <WeatherIcon />
          <Stack>
            <Line $color="#1a1a1a" $track={-0.8}>22°C</Line>
            <Line $color="#5d5d5d" $weight={300}>多雲時晴</Line>
          </Stack>
        </Weather>
        <AppSlot>
          <WindowsIcon />
        </AppSlot>
        <SearchPill>
          <Stroke w={30} sw={3.600} color="#1f1f1f" cap="round">
            <circle cx="13" cy="13" r="11" />
            <path d="M20.500 20.500L28 28" />
          </Stroke>
          <SearchText $size={27} $color="#5a5a5a" $weight={300}>搜尋</SearchText>
          <SearchScene />
        </SearchPill>
        <AppSlot>
          <TaskViewIcon />
        </AppSlot>
        <AppSlot>
          <ChatIcon />
        </AppSlot>
        <AppSlot>
          <FolderIcon />
          <Running />
        </AppSlot>
        <AppSlot>
          <EdgeIcon />
          <Running />
        </AppSlot>
        <AppSlot>
          <StoreIcon />
        </AppSlot>
        <ActiveSlot>
          <ChromeIcon />
          <Running $active />
        </ActiveSlot>
        <AppSlot>
          <CodeIcon />
          <Running />
        </AppSlot>
        <AppSlot>
          <PhotoIcon />
          <Running />
        </AppSlot>
        <AppSlot>
          <PostmanIcon />
          <Running />
        </AppSlot>
        <Tray>
          <Stroke w={22} h={13} sw={2.600} color="#1a1a1a">
            <path d="M1 12L11 2L21 12" />
          </Stroke>
          <TrayLabel $color="#1a1a1a" $track={-0.6}>ENG</TrayLabel>
          <TrayIcon $right={16}>
            <Stroke w={33} h={34} sw={2.400} color="#1a1a1a">
              <path d="M21 2H5Q1.500 2 1.500 5.500V22.500Q1.500 26 5 26H24M11 26V32M17 26V32M7 32H21" />
              <rect x="23" y="2" width="8.500" height="12.500" rx="2.500" />
              <path d="M23 8H31.500M27.200 14.500V33" />
            </Stroke>
          </TrayIcon>
          <TrayIcon $right={31}>
            <Stroke w={33} h={30} sw={2.300} color="#1a1a1a">
              <path d="M2 10.500Q2 9.500 3 9.500H7L13.500 3.500V26.500L7 20.500H3Q2 20.500 2 19.500zM17.500 10.500Q20 15 17.500 19.500M21.500 6.500Q27 15 21.500 23.500M25.500 2.500Q34.500 15 25.500 27.500" />
            </Stroke>
          </TrayIcon>
          <Stack $align="flex-end">
            <Line $color="#1a1a1a" $track={-0.6}>下午 05:40</Line>
            <Line $color="#1a1a1a" $track={-0.6}>2024/1/19</Line>
          </Stack>
          <BellSlot>
            <svg width="26" height="32" viewBox="0 0 26 32" fill="#003e92">
              <path d="M3 11Q3 1 13 1T23 11V19L26 24.500H0L3 19zM8 27H18Q17 31 13 31T8 27z" />
            </svg>
          </BellSlot>
        </Tray>
      </Taskbar>

      <ActivateNotice>
        <Label $size={40} $track={0.3} $color="#8f9193">啟用 Windows</Label>
        <Label $size={28.5} $color="#8f9193">移至 [設定] 以啟用 Windows。</Label>
      </ActivateNotice>
    </Screen>
  );
}
